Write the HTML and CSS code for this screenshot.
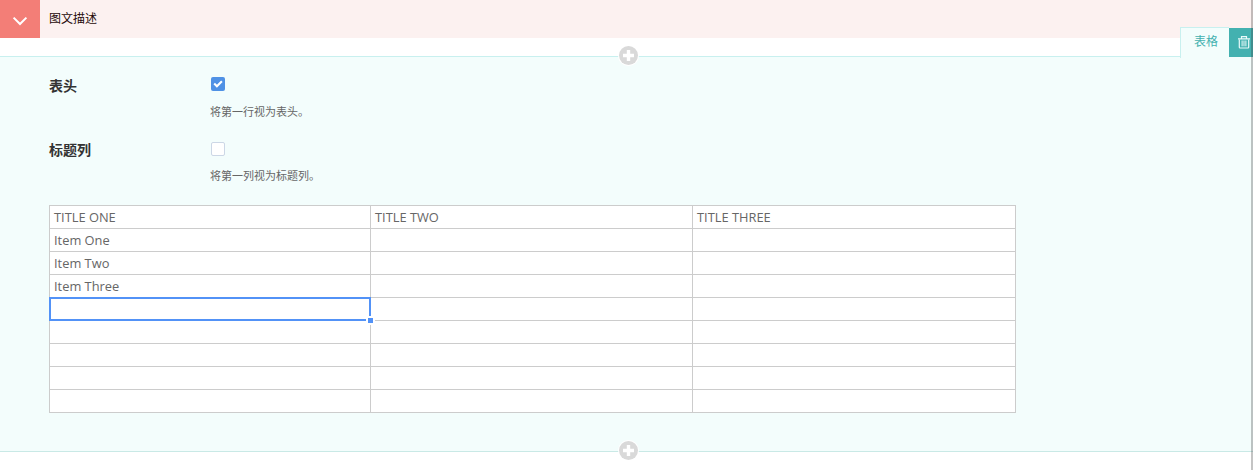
FILE: index.html
```html
<!DOCTYPE html>
<html lang="zh-CN">
<head>
<meta charset="utf-8">
<title>图文描述</title>
<link rel="stylesheet" href="styles.css">
</head>
<body>
<div class="page">
  <header class="section-head">
    <button class="toggle" aria-label="折叠"><svg width="16" height="10" viewBox="0 0 16 10"><path d="M1.6 1.6 8 8 14.4 1.6" fill="none" stroke="#fff" stroke-width="2"/></svg></button>
    <h2 class="section-title">图文描述</h2>
  </header>
  <section class="block">
    <div class="block-tools"><span class="block-type">表格</span><button class="block-delete" aria-label="删除"><svg width="13" height="14" viewBox="0 0 13 14" fill="none" stroke="#eafafa"><path d="M0 2.8h12M3.5 2.5V.7h5v1.8" stroke-width="1.2"/><path d="M1.3 3.5v7.7q0 .8.8.8h7.8q.8 0 .8-.8V3.5" stroke-width="1.2"/><path d="M4.1 4.5v5.8M6 4.5v5.8M7.9 4.5v5.8"/></svg></button></div>
    <button class="add add-top" aria-label="添加"><svg width="19" height="19" viewBox="0 0 19 19"><circle cx="9.5" cy="9.5" r="9.5" fill="#d9d9d9"/><path d="M9.5 4v11M4 9.5h11" stroke="#fff" stroke-width="3.4"/></svg></button>
    <div class="field">
      <div class="field-label">表头</div>
      <div class="field-body"><span class="check checked"><svg width="14" height="14" viewBox="0 0 14 14"><path d="M3.2 6.6 5.9 9.3 10.9 4.2" fill="none" stroke="#fff" stroke-width="2.1"/></svg></span><p class="help">将第一行视为表头。</p></div>
    </div>
    <div class="field">
      <div class="field-label">标题列</div>
      <div class="field-body field-body-low"><span class="check"></span><p class="help">将第一列视为标题列。</p></div>
    </div>
    <table class="sheet">
      <colgroup><col class="col-a"><col class="col-b"><col class="col-c"></colgroup>
      <tbody>
        <tr><td>TITLE ONE</td><td>TITLE TWO</td><td>TITLE THREE</td></tr>
        <tr><td>Item One</td><td></td><td></td></tr>
        <tr><td>Item Two</td><td></td><td></td></tr>
        <tr><td>Item Three</td><td></td><td></td></tr>
        <tr><td><div class="cell-anchor"><span class="selection"></span><span class="handle"></span></div></td><td></td><td></td></tr>
        <tr><td></td><td></td><td></td></tr>
        <tr><td></td><td></td><td></td></tr>
        <tr><td></td><td></td><td></td></tr>
        <tr><td></td><td></td><td></td></tr>
      </tbody>
    </table>
    <button class="add add-bottom" aria-label="添加"><svg width="19" height="19" viewBox="0 0 19 19"><circle cx="9.5" cy="9.5" r="9.5" fill="#d9d9d9"/><path d="M9.5 4v11M4 9.5h11" stroke="#fff" stroke-width="3.4"/></svg></button>
  </section>
  <div class="edge"></div>
</div>
</body>
</html>
```

FILE: styles.css
```css
* { box-sizing: border-box; }
body {
  margin: 0;
  background: #fff;
  color: #333;
  font-family: "Open Sans", "Noto Sans CJK SC", sans-serif;
}
button { border: 0; padding: 0; background: none; font: inherit; }
svg { display: block; }
.page { position: relative; height: 470px; overflow: hidden; }
.section-head {
  display: flex;
  align-items: center;
  height: 38px;
  background: #fcf1f0;
}
.toggle {
  display: flex;
  align-items: center;
  justify-content: center;
  width: 40px;
  height: 38px;
  padding-top: 3px;
  background: #f37e77;
}
.section-title {
  margin: 0 0 0 9px;
  font-size: 12px;
  font-weight: 400;
  line-height: 18px;
  color: #260909;
}
.block {
  position: relative;
  height: 396px;
  margin-top: 18px;
  padding: 19px 49px 0;
  background: #f3fdfc;
  border-top: 1px solid #c8f0ef;
  border-bottom: 1px solid #c9e9e6;
}
.block-tools {
  position: absolute;
  top: -30px;
  right: 0;
  display: flex;
  height: 31px;
}
.block-type {
  width: 49px;
  padding: 5px 0 0 13px;
  background: #f3fdfc;
  border: 1px solid #c8f0ef;
  border-width: 1px 0 0 1px;
  font-size: 12px;
  line-height: 18px;
  color: #43b1b0;
}
.block-delete {
  width: 24px;
  height: 29px;
  margin-top: 1px;
  padding: 0 0 0 9px;
  background: #43b1b0;
}
.add {
  position: absolute;
  left: 618px;
  width: 21px;
  height: 21px;
  padding: 1px;
  border-radius: 50%;
  background: #fff;
}
.add-top { top: -12px; }
.add-bottom { bottom: -10px; }
.field { display: flex; height: 64px; }
.field-label {
  width: 161px;
  font-size: 14px;
  font-weight: 700;
  line-height: 20px;
}
.field-body { padding-top: 1px; }
.field-body-low { padding-top: 2px; }
.field-body-low .help { margin-top: 12px; }
.check {
  display: block;
  width: 14px;
  height: 14px;
  margin-left: 1px;
  background: #fff;
  border: 1px solid #ccd7e6;
  border-radius: 2px;
}
.checked { border: 0; background: #4f91e5; }
.help {
  margin: 13px 0 0;
  font-size: 11px;
  line-height: 16px;
  color: #666;
}
.sheet {
  width: 967px;
  margin-top: 1px;
  table-layout: fixed;
  border-collapse: collapse;
  background: #fff;
  font-size: 12.85px;
  line-height: 22px;
  color: #666;
}
.sheet tr { height: 23px; }
.sheet td { height: 23px; padding: 0 4px; border: 1px solid #ccc; }
.col-a { width: 321px; }
.col-b { width: 322px; }
.col-c { width: 323px; }
.cell-anchor { position: relative; height: 22px; }
.selection {
  position: absolute;
  top: -1px;
  left: -5px;
  width: 322px;
  height: 24px;
  border: 2px solid #5292f7;
}
.handle {
  position: absolute;
  top: 18px;
  left: 312px;
  width: 9px;
  height: 9px;
  border: 2px solid #fff;
  background: #5292f7;
}
.edge {
  position: absolute;
  top: 0;
  right: 0;
  width: 2px;
  height: 470px;
  background: rgba(60, 60, 60, .3);
}
```
